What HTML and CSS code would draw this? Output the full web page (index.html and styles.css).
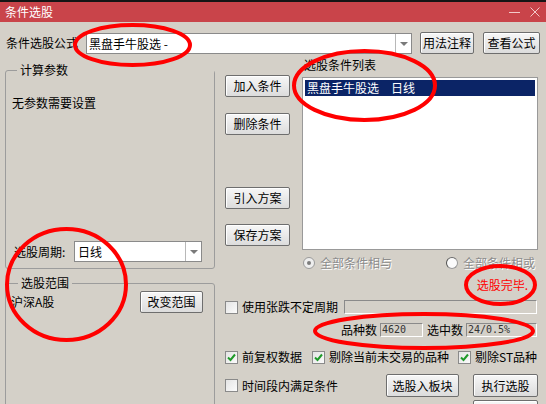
FILE: index.html
```html
<!DOCTYPE html>
<html lang="zh-CN">
<head>
    <meta charset="UTF-8">
    <title>条件选股</title>
    <link rel="stylesheet" href="styles.css">
</head>
<body>
    <div class="window">
        <div class="titlebar">
            <span class="title">条件选股</span>
            <span class="win-ctrl">
                <svg width="11" height="10" viewBox="0 0 11 10"><line x1="0" y1="5.5" x2="11" y2="5.5" stroke="#f3c9c9" stroke-width="1"/></svg>
                <svg width="10" height="10" viewBox="0 0 10 10"><path d="M0.5 0.5 L9.5 9.5 M9.5 0.5 L0.5 9.5" stroke="#f3c9c9" stroke-width="1"/></svg>
            </span>
        </div>

        <div class="formula-row">
            <span class="formula-label">条件选股公式</span>
            <div class="combo combo-formula">
                <span class="combo-text">黑盘手牛股选 -</span>
                <span class="combo-arrow"></span>
            </div>
            <button class="btn btn-usage">用法注释</button>
            <button class="btn btn-view">查看公式</button>
        </div>

        <div class="main">
            <div class="left-col">
                <div class="group group-params">
                    <div class="group-title">计算参数</div>
                    <div class="no-params">无参数需要设置</div>
                    <div class="period-select">
                        <span class="period-label">选股周期:</span>
                        <div class="combo combo-period">
                            <span class="combo-text">日线</span>
                            <span class="combo-arrow"></span>
                        </div>
                    </div>
                </div>
                <div class="group group-range">
                    <div class="group-title">选股范围</div>
                    <div class="range-row">
                        <span>沪深A股</span>
                        <button class="btn btn-range">改变范围</button>
                    </div>
                </div>
            </div>

            <div class="right-col">
                <div class="upper">
                    <div class="btn-col">
                        <button class="btn btn-side">加入条件</button>
                        <button class="btn btn-side btn-del">删除条件</button>
                        <button class="btn btn-side btn-load">引入方案</button>
                        <button class="btn btn-side btn-save">保存方案</button>
                    </div>
                    <div class="list-col">
                        <div class="list-label">选股条件列表</div>
                        <div class="listbox">
                            <div class="list-item selected">黑盘手牛股选　日线</div>
                        </div>
                    </div>
                </div>

                <div class="radio-row">
                    <span class="radio checked"><span class="radio-dot"></span></span>
                    <span class="radio-text">全部条件相与</span>
                    <span class="radio radio-or"></span>
                    <span class="radio-text">全部条件相或</span>
                </div>

                <div class="status">选股完毕.</div>

                <div class="period-row">
                    <span class="cb"></span>
                    <span class="cb-text">使用张跌不定周期</span>
                    <span class="sunken progress"></span>
                </div>

                <div class="count-row">
                    <span>品种数</span>
                    <span class="sunken field field-total">4620</span>
                    <span>选中数</span>
                    <span class="sunken field field-picked">24/0.5%</span>
                </div>

                <div class="check-row">
                    <span class="check">
                        <span class="cb"><svg width="11" height="11" viewBox="0 0 11 11"><path d="M2 5.5 L4.5 8 L9 2.5" fill="none" stroke="#1f9a2a" stroke-width="2"/></svg></span>
                        <span class="cb-text">前复权数据</span>
                    </span>
                    <span class="check check-mid">
                        <span class="cb"><svg width="11" height="11" viewBox="0 0 11 11"><path d="M2 5.5 L4.5 8 L9 2.5" fill="none" stroke="#1f9a2a" stroke-width="2"/></svg></span>
                        <span class="cb-text">剔除当前未交易的品种</span>
                    </span>
                    <span class="check check-st">
                        <span class="cb"><svg width="11" height="11" viewBox="0 0 11 11"><path d="M2 5.5 L4.5 8 L9 2.5" fill="none" stroke="#1f9a2a" stroke-width="2"/></svg></span>
                        <span class="cb-text">剔除ST品种</span>
                    </span>
                </div>

                <div class="bottom-row">
                    <span class="check">
                        <span class="cb"></span>
                        <span class="cb-text">时间段内满足条件</span>
                    </span>
                    <button class="btn btn-block">选股入板块</button>
                    <button class="btn btn-run">执行选股</button>
                </div>

                <div class="extra-row">
                    <button class="btn btn-run" aria-label="关闭"></button>
                </div>
            </div>
        </div>

        <!-- 红色标注圈 -->
        <svg class="marks" width="546" height="404" viewBox="0 0 546 404">
            <g fill="none" stroke="#ff0000" stroke-width="4">
                <ellipse cx="132.5" cy="45" rx="57.5" ry="20"/>
                <ellipse cx="364.5" cy="85.5" rx="70.5" ry="34.5"/>
                <ellipse cx="66.5" cy="284.5" rx="59.5" ry="55.5"/>
                <ellipse cx="500.5" cy="285" rx="34.5" ry="19"/>
                <ellipse cx="424" cy="331" rx="109" ry="17"/>
            </g>
        </svg>
    </div>
</body>
</html>
```

FILE: styles.css
```css
* {
    box-sizing: border-box;
}

body {
    margin: 0;
    font-family: "Noto Sans CJK SC", "Liberation Sans", sans-serif;
    font-size: 12px;
    line-height: 16px;
    color: #000;
}

.window {
    position: relative;
    width: 546px;
    height: 404px;
    overflow: hidden;
    background: #d4d0c8;
}

/* 标题栏 */
.titlebar {
    display: flex;
    align-items: center;
    justify-content: space-between;
    height: 22px;
    border-top: 2px solid #151515;
    background: #c9444a;
    padding: 0 6px 0 5px;
    color: #fff;
}

.win-ctrl {
    display: flex;
    align-items: center;
    gap: 10px;
}

.win-ctrl svg {
    display: block;
}

/* 公式行 */
.formula-row {
    display: flex;
    align-items: center;
    height: 22px;
    margin-top: 10px;
    padding-left: 6px;
}

.formula-label {
    width: 80px;
}

.combo {
    display: flex;
    align-items: stretch;
    height: 21px;
    border: 1px solid #8a8a8a;
    background: #fff;
}

.combo-text {
    flex: 1;
    padding-left: 2px;
    line-height: 19px;
}

.combo-arrow {
    position: relative;
    width: 16px;
    border-left: 1px solid #b8b8b8;
}

.combo-arrow::after {
    content: "";
    position: absolute;
    left: 4px;
    top: 8px;
    border-left: 4px solid transparent;
    border-right: 4px solid transparent;
    border-top: 4px solid #7a7a7a;
}

.combo-formula {
    width: 326px;
}

.btn {
    height: 22px;
    padding: 0;
    border: 1px solid #6e6e6e;
    border-radius: 2px;
    background: linear-gradient(#f7f7f7, #dcdcdc);
    box-shadow: inset 1px 1px 0 #fff;
    font: inherit;
    color: #000;
}

.btn-usage {
    width: 54px;
    margin-left: 8px;
}

.btn-view {
    width: 57px;
    margin-left: 9px;
}

/* 主体 */
.main {
    display: flex;
    margin-top: 2px;
}

.left-col {
    width: 215px;
    padding-left: 5px;
}

.group {
    border: 1px solid #9c9c9c;
    border-radius: 3px;
}

.group-title {
    display: table;
    margin: -8px 0 0 3px;
    padding: 0 3px;
    line-height: 14px;
    background: #d4d0c8;
}

.group-params {
    display: flex;
    flex-direction: column;
    height: 199px;
    margin-top: 14px;
    padding: 0 0 6px 8px;
}

.no-params {
    margin-top: 18px;
    margin-left: -2px;
}

.period-select {
    display: flex;
    align-items: center;
    margin-top: auto;
}

.period-label {
    width: 60px;
}

.combo-period {
    width: 128px;
}

.combo-period .combo-text {
    padding-left: 3px;
}

.group-range {
    height: 160px;
    margin-top: 14px;
    padding: 0 11px 0 5px;
}

.group-range .group-title {
    margin-left: 7px;
}

.range-row {
    display: flex;
    align-items: center;
    justify-content: space-between;
    margin-top: 1px;
}

.btn-range {
    width: 63px;
}

.right-col {
    width: 313px;
    margin-left: 10px;
}

.upper {
    display: flex;
    height: 194px;
}

.btn-col {
    display: flex;
    flex-direction: column;
    width: 65px;
    padding-top: 19px;
}

.btn-side {
    width: 65px;
}

.btn-del {
    margin-top: 16px;
}

.btn-load {
    margin-top: 52px;
}

.btn-save {
    margin-top: 15px;
}

.list-col {
    width: 236px;
    margin-left: 12px;
}

.list-label {
    margin-top: 1px;
    padding-left: 2px;
}

.listbox {
    height: 173px;
    margin-top: 4px;
    padding: 2px;
    border: 1px solid #999;
    background: #fff;
}

.list-item {
    height: 16px;
    padding-left: 2px;
}

.list-item.selected {
    background: #0b2466;
    color: #fff;
}

/* 单选 */
.radio-row {
    display: flex;
    align-items: center;
    height: 16px;
    margin: 5px 0 0 78px;
    color: #8c8c8c;
    text-shadow: 1px 1px 0 #fff;
}

.radio {
    display: flex;
    align-items: center;
    justify-content: center;
    width: 12px;
    height: 12px;
    border: 1px solid #9a9a9a;
    border-radius: 50%;
    background: #eeeeee;
}

.radio-dot {
    width: 4px;
    height: 4px;
    border-radius: 50%;
    background: #7c7c7c;
}

.radio-or {
    margin-left: 54px;
    border-left-color: #505050;
    border-top-color: #6a6a6a;
    background: #fbfbfb;
}

.radio-text {
    margin-left: 5px;
}

.status {
    height: 16px;
    margin-top: 6px;
    padding-right: 10px;
    text-align: right;
    color: #ff0000;
}

/* 复选 */
.cb {
    display: flex;
    align-items: center;
    justify-content: center;
    flex: none;
    width: 13px;
    height: 13px;
    border: 1px solid #8a8a8a;
    background: linear-gradient(135deg, #e4e4e4, #fbfbfb);
}

.cb svg {
    display: block;
}

.cb-text {
    margin-left: 4px;
}

.period-row {
    display: flex;
    align-items: center;
    height: 16px;
    margin-top: 6px;
}

.sunken {
    border: 1px solid;
    border-color: #8a8a8a #fff #fff #8a8a8a;
    background: #d4d0c8;
}

.progress {
    flex: 1;
    height: 14px;
    margin-left: 6px;
    margin-right: 1px;
}

.count-row {
    display: flex;
    align-items: center;
    justify-content: flex-end;
    height: 16px;
    margin-top: 7px;
    padding-right: 1px;
}

.field {
    height: 14px;
    margin-left: 3px;
    padding-left: 1px;
    font-family: "DejaVu Sans Mono", "Liberation Mono", monospace;
    font-size: 10px;
    line-height: 12px;
    color: #333;
}

.field-total {
    width: 43px;
    margin-right: 4px;
}

.field-picked {
    width: 71px;
}

.check-row {
    display: flex;
    align-items: center;
    height: 16px;
    margin-top: 11px;
}

.check {
    display: flex;
    align-items: center;
}

.check-mid {
    margin-left: 10px;
}

.check-st {
    margin-left: 9px;
}

.bottom-row {
    display: flex;
    align-items: center;
    height: 23px;
    margin-top: 9px;
}

.btn-block {
    width: 73px;
    height: 23px;
    margin-left: auto;
}

.btn-run {
    width: 65px;
    height: 23px;
    margin-left: 14px;
}

.extra-row {
    display: flex;
    justify-content: flex-end;
    margin-top: 3px;
}

.marks {
    position: absolute;
    left: 0;
    top: 0;
    pointer-events: none;
}
```
